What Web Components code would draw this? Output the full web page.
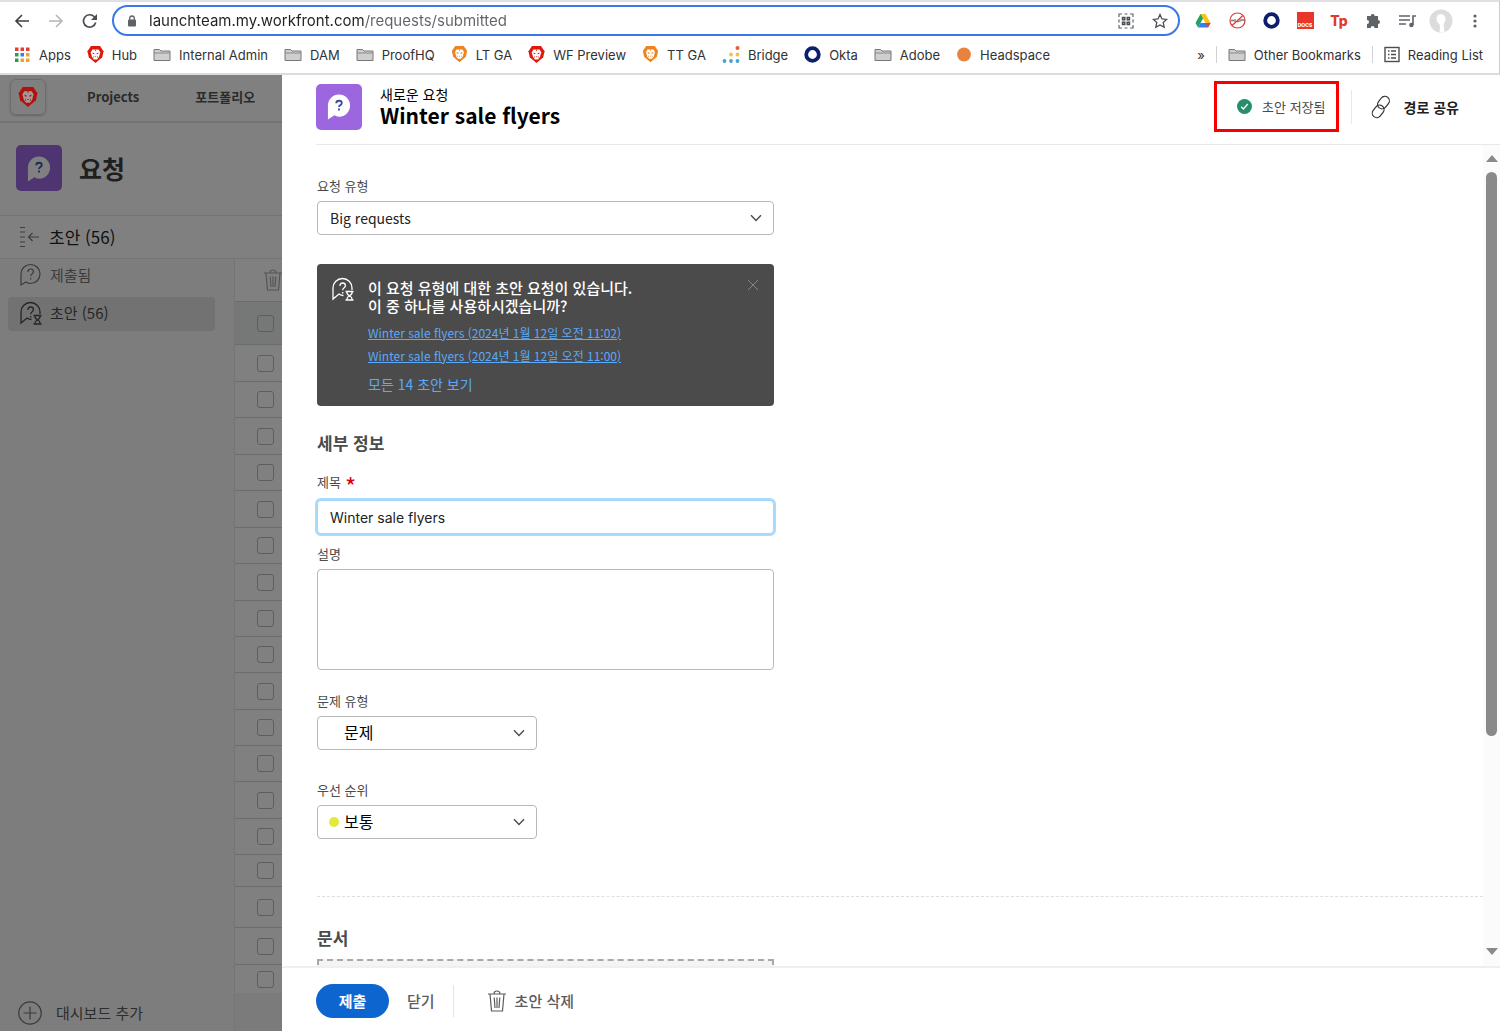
<!DOCTYPE html>
<html lang="ko">
<head>
<meta charset="utf-8">
<title>요청 - Workfront</title>
<style>
  html, body { height: 100%; margin: 0; }
  body { font-family: "Noto Sans CJK KR", sans-serif; color: #222; background: #fff; overflow: hidden; }
</style>
</head>
<body>
<wf-page></wf-page>

<script>
const LION = c => `<path fill="${c}" d="M4 0h10l4 6-1.500 6.500L9 19l-7.500-6.500L0 6z"/><path fill="#fff" d="M5.500 4h7l1.700 3-1.200 5-2.200 3H7.200L5 12 3.800 7z"/><path fill="${c}" d="M5.500 7.200l2.300.8-.2 1.300-1.600-.5zM12.500 7.200l-2.300.8.2 1.300 1.600-.5zM8 11.500h2l-1 1.200zM8.300 4h1.400L9 6.500zM6.300 10.500l1.200 3-1.200-1zM11.700 10.500l-1.200 3 1.200-1z"/>`;
const BUBBLE = '<path d="M2 22V11a9.500 9.500 0 1 1 9.500 9.500q-2 0-4.500-1.500z"/>';
const QMARK = '<path d="M9 9q0-3 2.700-3t2.700 2.600q0 1.600-1.500 2.400-1.200.7-1.200 2.300M11.700 15v1.600"/>';
const DRAFT = '<path d="M12.500 18.500q-2.500 0-4.500-1.500L2 22V11a9.500 9.500 0 1 1 19 0v2M14.500 14.500h8M14.500 23h8M15.800 15q0 2.500 2.700 3.800 2.700-1.300 2.700-3.800M15.800 22.800q0-2.500 2.700-4 2.700 1.500 2.700 4"/>';
const ICONS = {
  back: [16, 16, '<path d="M15 8H2M8 2L2 8l6 6" fill="none" stroke="#3c4043" stroke-width="1.600"/>'],
  forward: [16, 16, '<path d="M1 8h13M8 2l6 6-6 6" fill="none" stroke="#b5b7ba" stroke-width="1.600"/>'],
  reload: [16, 16, '<path d="M13.700 9.500A6.200 6.200 0 1 1 12.300 3.800L14.300 5.800" fill="none" stroke="#4a4d51" stroke-width="1.700"/><path d="M15 1v6H9z" fill="#4a4d51"/>'],
  lock: [10, 12, '<rect x="1" y="4.500" width="8" height="7" rx="1" fill="#5f6368"/><path d="M2.700 5V3.300a2.300 2.300 0 0 1 4.600 0V5" fill="none" stroke="#5f6368" stroke-width="1.300"/>'],
  qr: [16, 16, '<path d="M1 4V1h3M6.500 1h3M12 1h3v3M15 6.500v3M15 12v3h-3M9.500 15h-3M4 15H1v-3M1 9.500v-3" fill="none" stroke="#5f6368" stroke-width="1.200"/><path d="M3.800 3.800h3.700v3.700H3.800zM8.500 3.800h3.700v3.700H8.500zM3.800 8.500h3.700v3.700H3.800zM8.500 8.500h3.700v3.700H8.500z" fill="#4a4d51"/><path d="M5.200 5.200h.9v.9h-.9zM9.900 5.200h.9v.9h-.9zM5.200 9.900h.9v.9h-.9zM9.900 9.900h.9v.9h-.9z" fill="#ccc"/>'],
  star: [16, 16, '<path d="M8 1.500l2 4.400 4.700.5-3.500 3.200 1 4.700L8 11.900l-4.200 2.400 1-4.700L1.300 6.400 6 5.900z" fill="none" stroke="#4a4d51" stroke-width="1.300"/>'],
  drive: [16, 16, '<path d="M5.500 1h5L8 5.500 3 14.500.5 10z" fill="#1da362"/><path d="M5.500 1h5l5 9h-5z" fill="#fbc116"/><path d="M3 14.500L5.500 10H15.500L13 14.500z" fill="#3b7ded"/><path d="M10.800 10h4.700L13 14.500z" fill="#e94235"/>'],
  nosign: [17, 17, '<circle cx="8.500" cy="8.500" r="7.500" fill="#fff" stroke="#dc3b3b" stroke-width="1.200"/><path d="M2 8.500h3M6 7v3M8 9.500h2M11 7v3M12 8h4" stroke="#777" stroke-width="1.300"/><path d="M14 3.500L3 13.500" stroke="#dc3b3b" stroke-width="1.300"/>'],
  ring: [17, 17, '<circle cx="8.500" cy="8.500" r="6.300" fill="none" stroke="#0b1f6e" stroke-width="3.800"/>'],
  puzzle: [17, 17, '<path d="M2 4h3.700a2 2 0 1 1 4 0H13v4a2 2 0 1 1 0 4v4H9.500a1.900 1.900 0 1 0-3.800 0H2v-4a2 2 0 1 0 0-4z" fill="#5f6368"/>'],
  music: [17, 14, '<path d="M0 2h11M0 6h11M0 10h7" stroke="#5f6368" stroke-width="1.600"/><path d="M14 11V2h3" fill="none" stroke="#5f6368" stroke-width="1.600"/><circle cx="12.400" cy="11" r="2.200" fill="#5f6368"/>'],
  avatar: [24, 24, '<circle cx="12" cy="12" r="11.500" fill="#dcdcdc"/><path d="M12 5c3 0 4.500 2.200 4.500 5 0 2-.8 4-2 5l.5 3 .5 5.500h-5L11 18l-.3-2.500Q7.500 13 7.500 10 7.500 5 12 5z" fill="#fff"/>'],
  dots: [4, 16, '<g fill="#5f6368"><circle cx="2" cy="3" r="1.600"/><circle cx="2" cy="8" r="1.600"/><circle cx="2" cy="13" r="1.600"/></g>'],
  apps: [17, 17, '<g><path fill="#e03d33" d="M1 1.500h3.500V5H1zM6.500 1.500H10V5H6.500zM12 1.500h3.500V5H12z"/><path fill="#2e9a50" d="M1 7h3.500v3.500H1zM1 12.500h3.500V16H1z"/><path fill="#3b7ded" d="M6.500 7H10v3.500H6.500z"/><path fill="#f0a32c" d="M12 7h3.500v3.500H12zM6.500 12.500H10V16H6.500zM12 12.500h3.500V16H12z"/></g>'],
  lionRed: [17, 17, LION('#e0170c'), '0 0 18 19'],
  lionOrange: [17, 17, LION('#ee8420'), '-1 0 20 20'],
  folder: [18, 17, '<path d="M1 14.500V3.500h5.500L8 5h9v9.500z" fill="#cfcfcf" stroke="#777"/><path d="M1 7h16" stroke="#888"/>'],
  bridge: [18, 17, '<circle cx="15.500" cy="2" r="2" fill="#ec5a33"/><g fill="#f2c14a"><circle cx="15.500" cy="8.500" r="1.900"/><circle cx="9" cy="8.500" r="1.900"/></g><g fill="#4aa3c7"><circle cx="15.500" cy="15" r="1.900"/><circle cx="9" cy="15" r="1.900"/><circle cx="2.500" cy="15" r="1.900"/></g>'],
  headspace: [16, 17, '<circle cx="8" cy="8.500" r="6.900" fill="#e8833f"/>'],
  list: [16, 17, '<rect x="1" y="1.500" width="14" height="14" fill="none" stroke="#4a4d51" stroke-width="1.400"/><path d="M4 5h1.500M7 5h5M4 8.500h1.500M7 8.500h5M4 12h1.500M7 12h5" stroke="#4a4d51" stroke-width="1.500"/>'],
  lionDim: [20, 20, LION('#b3120b').replace('#fff', '#a39a9a'), '0 0 18 19'],
  collapse: [21, 22, '<path d="M1 1.500h5M1 6h5M1 11h5M1 16h5M1 20.500h5M9 11h11M13.500 7L9.500 11l4 4" fill="none" stroke="#3d3d3d" stroke-width="1.200"/>'],
  request: [24, 24, `<g fill="none" stroke="currentColor" stroke-width="1.200">${BUBBLE}${QMARK}</g>`],
  draft: [24, 24, `<g fill="none" stroke="currentColor" stroke-width="1.300">${DRAFT}${QMARK}</g>`],
  trash: [20, 22, '<g fill="none" stroke="currentColor" stroke-width="1.200"><path d="M1 4h18M3 4l1.500 17h11L17 4M7 4q0-3 3-3t3 3M7.200 7.500L8 18M10 7.500V18M12.800 7.500L12 18"/></g>'],
  plus: [24, 24, '<g fill="none" stroke="#3a3a3a" stroke-width="1.200"><circle cx="12" cy="12" r="11.200"/><path d="M12 5.500v13M5.500 12h13"/></g>'],
  chevron: [12, 8, '<path d="M1 1.200l5 5.200 5-5.200" fill="none" stroke="#4b4b4b" stroke-width="1.400"/>'],
  close: [10, 10, '<path d="M0 0l10 10M10 0L0 10" stroke="#858585"/>'],
  check: [15, 15, '<circle cx="7.500" cy="7.500" r="7.500" fill="#268e6c"/><path d="M4.200 7.800l2.200 2.200L10.800 5" fill="none" stroke="#fff" stroke-width="1.400"/>'],
  link: [20, 24, '<g fill="none" stroke="#333" stroke-width="1.200"><rect x="8" y=".8" width="9" height="13.500" rx="4.500" transform="rotate(38 12.500 7.500)"/><rect x="2.500" y="9.500" width="9" height="13.500" rx="4.500" transform="rotate(38 7 16.500)"/></g>'],
  up: [12, 7, '<path d="M0 7l6-7 6 7z" fill="#8a8a8a"/>'],
  down: [12, 7, '<path d="M0 0l6 7 6-7z" fill="#8a8a8a"/>']
};

class Base extends HTMLElement {
  connectedCallback() {
    if (this.shadowRoot) return;
    this.attachShadow({ mode: 'open' }).innerHTML =
      `<style>*{box-sizing:border-box} button,input,select,textarea{font:inherit;color:inherit;margin:0} button{background:none;border:0;padding:0;display:flex;align-items:center} a{color:inherit;text-decoration:none} ${this.css()}</style>${this.html()}`;
  }
  at(name) { return this.getAttribute(name) || ''; }
}

customElements.define('ui-icon', class extends Base {
  css() { return ':host{display:inline-flex;flex:none} svg{display:block}'; }
  html() {
    const [w, h, body, vb] = ICONS[this.at('name')];
    return `<svg width="${w}" height="${h}" viewBox="${vb || `0 0 ${w} ${h}`}" aria-hidden="true">${body}</svg>`;
  }
});

customElements.define('request-badge', class extends Base {
  css() {
    return `:host{display:flex;flex:none;align-items:center;justify-content:center;width:46px;height:46px;border-radius:5px;background:var(--badge,#9c67de)}`;
  }
  html() {
    return `<svg width="24" height="27" viewBox="0 0 26 28"><path fill="var(--bubble,#fff)" d="M1 28V13A12 12 0 1 1 13 25q-3 0-5-1.500z"/><path d="M10 10.500q0-2.700 3-2.700t3 2.500q0 1.500-1.700 2.300-1.300.7-1.300 2M13 16.300v2" fill="none" stroke="var(--mark,#3b4ba0)" stroke-width="2"/></svg>`;
  }
});

customElements.define('bookmark-link', class extends Base {
  css() { return ':host{display:flex;flex:none} a{display:flex;align-items:center;gap:8px;white-space:nowrap}'; }
  html() { return `<a href="#"><ui-icon name="${this.at('icon')}"></ui-icon><span><slot></slot></span></a>`; }
});

customElements.define('browser-bar', class extends Base {
  css() {
    return `
    :host{display:block;flex:none;height:75px;font-family:Inter,sans-serif;color:#303236;border-top:2px solid #dfe0e4;border-bottom:2px solid #dcdcdc;border-right:1px solid #ccc;background:#fff}
    .tools{display:flex;align-items:center;height:37px;padding:0 7px 0 14px}
    .nav{display:flex;gap:18px;margin-right:14px}
    .omni{flex:1;display:flex;align-items:center;height:31px;border:2px solid #3b78e7;border-radius:16px;padding:0 10px 0 13px}
    .omni input{flex:1;min-width:0;border:0;outline:0;padding:0 0 0 12px;font-size:15px;line-height:20px;color:#202124;-webkit-text-fill-color:transparent;background:linear-gradient(to right,#202124 228px,#5f6368 228px);-webkit-background-clip:text;background-clip:text}
    .omni div{display:flex;gap:18px}
    .ext{display:flex;align-items:center;margin-left:6px}
    .ext button{width:34px;height:26px;justify-content:center}
    .docs{display:flex;align-items:flex-end;justify-content:center;width:17px;height:17px;background:#e8362a;color:#fff;font:800 5px/8px Inter,sans-serif}
    .tp{color:#e0392d;font:800 14px/17px Inter,sans-serif}
    .marks{display:flex;align-items:center;gap:16px;height:31px;padding:0 16px 0 14px;font-size:13px;line-height:18px}
    .right{margin-left:auto;display:flex;align-items:center;gap:11px}
    .sep{width:1px;height:17px;background:#d0d2d5}`;
  }
  html() {
    const marks = [['apps', 'Apps'], ['lionRed', 'Hub'], ['folder', 'Internal Admin'], ['folder', 'DAM'], ['folder', 'ProofHQ'], ['lionOrange', 'LT GA'], ['lionRed', 'WF Preview'], ['lionOrange', 'TT GA'], ['bridge', 'Bridge'], ['ring', 'Okta'], ['folder', 'Adobe'], ['headspace', 'Headspace']];
    const btn = (n, l) => `<button aria-label="${l}"><ui-icon name="${n}"></ui-icon></button>`;
    return `
    <div class="tools">
      <div class="nav">${btn('back', '뒤로')}${btn('forward', '앞으로')}${btn('reload', '새로고침')}</div>
      <div class="omni"><ui-icon name="lock"></ui-icon><input type="text" aria-label="주소" value="launchteam.my.workfront.com/requests/submitted"><div>${btn('qr', 'QR')}${btn('star', '북마크')}</div></div>
      <div class="ext">${btn('drive', 'Drive')}${btn('nosign', '차단')}${btn('ring', 'Okta')}<button><span class="docs">DOCS</span></button><button><span class="tp">Tp</span></button>${btn('puzzle', '확장')}${btn('music', '미디어')}${btn('avatar', '프로필')}${btn('dots', '메뉴')}</div>
    </div>
    <div class="marks">
      ${marks.map(([i, t]) => `<bookmark-link icon="${i}">${t}</bookmark-link>`).join('')}
      <div class="right"><button>»</button><span class="sep"></span><bookmark-link icon="folder">Other Bookmarks</bookmark-link><span class="sep"></span><bookmark-link icon="list">Reading List</bookmark-link></div>
    </div>`;
  }
});

customElements.define('nav-item', class extends Base {
  css() {
    return `:host{display:block;color:#3c3c3c}
    a{display:flex;align-items:center;gap:7px;height:34px;padding:0 11px 2px;border-radius:4px;font-size:15px;line-height:20px}
    :host([active]) a{background:#727272;color:#262626}`;
  }
  html() { return `<a href="#"><ui-icon name="${this.at('icon')}"></ui-icon><slot></slot></a>`; }
});

customElements.define('draft-rows', class extends Base {
  css() {
    return `:host{display:block;border-left:1px solid #757575}
    .bar{display:flex;align-items:center;height:42px;padding-left:28px;color:#555;overflow:hidden}
    .row{display:flex;align-items:center;padding-left:22px;border-top:1px solid #6c6c6c}
    .row.on{background:#767777}
    input{appearance:none;width:17px;height:17px;border:1px solid #5e5e5e;border-radius:3px}
    .rest{height:38px;background:#7b7b7b}`;
  }
  html() {
    const h = [43, 37, 36, 37, 36, 37, 36, 37, 36, 36, 37, 36, 36, 37, 36, 32, 41, 37, 29];
    return `<div class="bar"><ui-icon name="trash"></ui-icon></div>` +
      h.map((v, i) => `<div class="row${i ? '' : ' on'}" style="height:${v}px"><input type="checkbox" aria-label="초안 ${i + 1}"></div>`).join('') + '<div class="rest"></div>';
  }
});

customElements.define('app-backdrop', class extends Base {
  css() {
    return `:host{display:flex;flex-direction:column;width:282px;flex:none;background:#808080;color:#2b2b2b;overflow:hidden}
    header{display:flex;align-items:center;height:48px;padding:0 0 3px 10px;border-bottom:2px solid #737373;font-size:13px;font-weight:700;line-height:20px;flex:none}
    .logo{display:flex;align-items:center;justify-content:center;width:36px;height:36px;border:1px solid #6d6d6d;border-radius:6px;box-shadow:0 1px 2px #666;margin-right:41px}
    .proj{margin-right:56px}
    .title{display:flex;align-items:center;gap:17px;height:93px;padding:0 0 2px 16px;border-bottom:1px solid #747474;--badge:#4f3472;--bubble:#808080;--mark:#1e2a5c;flex:none}
    h1{margin:0;font-size:25px;line-height:32px;font-weight:700;color:#1f1f1f}
    .crumb{display:flex;align-items:center;gap:9px;height:43px;padding-left:19px;border-bottom:1px solid #747474;font-size:17px;line-height:24px;color:#111;flex:none}
    .cols{display:flex;flex:1;min-height:0}
    nav{display:flex;flex-direction:column;width:234px;flex:none;background:#7d7d7d;padding:0 19px 0 8px}
    nav nav-item + nav-item{margin-top:4px}
    .add{margin-top:auto;gap:14px;height:37px;padding-left:10px;font-size:15px;line-height:20px;color:#2d2d2d}
    draft-rows{flex:1}`;
  }
  html() {
    return `
    <header><a class="logo" href="#" aria-label="홈"><ui-icon name="lionDim"></ui-icon></a><a class="proj" href="#">Projects</a><a href="#">포트폴리오</a></header>
    <div class="title"><request-badge></request-badge><h1>요청</h1></div>
    <div class="crumb"><ui-icon name="collapse"></ui-icon>초안 (56)</div>
    <div class="cols">
      <nav><nav-item icon="request">제출됨</nav-item><nav-item icon="draft" active>초안 (56)</nav-item>
        <button class="add"><ui-icon name="plus"></ui-icon>대시보드 추가</button></nav>
      <draft-rows></draft-rows>
    </div>`;
  }
});

customElements.define('panel-header', class extends Base {
  css() {
    return `:host{display:flex;align-items:center;flex:none;height:70px;margin-left:34px;padding:0 41px 6px 0;border-bottom:1px solid #e8e8e8;color:#000}
    .t{margin-left:18px;padding-bottom:4px}
    .t p{margin:0;font-size:14px;line-height:20px}
    h2{margin:0;font-size:21px;line-height:22px;font-weight:700}
    .saved{display:flex;align-items:center;gap:10px;height:51px;margin-left:auto;padding:0 10px 0 20px;border:3px solid #f80000;font-size:13px;line-height:18px;color:#4b4b4b}
    .sep{width:1px;height:34px;background:#e8e8e8;margin:0 19px 0 12px}
    button{gap:13px;font-size:14px;font-weight:700;line-height:20px;color:#222}`;
  }
  html() {
    return `<request-badge></request-badge><div class="t"><p>새로운 요청</p><h2>Winter sale flyers</h2></div>
    <div class="saved" role="status"><ui-icon name="check"></ui-icon>초안 저장됨</div><span class="sep"></span>
    <button><ui-icon name="link"></ui-icon>경로 공유</button>`;
  }
});

customElements.define('form-field', class extends Base {
  css() {
    return `:host{display:block}
    label{display:flex;gap:4px;font-size:13px;line-height:20px;height:20px;margin-bottom:5px;color:#4b4b4b}
    label b{color:#d7000e;font-size:24px;line-height:28px;font-weight:400}
    .box{display:grid;align-items:center}
    .box > *{grid-area:1/1}
    .box ui-icon{justify-self:end;margin-right:12px;pointer-events:none}
    .box .dot{justify-self:start;width:10px;height:10px;border-radius:50%;background:#e2e93a;margin-left:12px}
    select,input,textarea{display:block;width:100%;height:34px;border:1px solid #b8b8b8;border-radius:4px;background:#fff;padding:0 12px;appearance:none;font-size:14px;color:#222;outline:0}
    textarea{height:101px;resize:none}
    :host([kind=short]){width:220px}
    :host([kind=short]) select{padding:0 26px 2px;font-size:16px;color:#000}
    :host([kind=input]) label{margin-bottom:8px}
    input{font-family:Inter,sans-serif;border-color:#a5d8f8;box-shadow:0 0 0 2px #a9dcfb}`;
  }
  html() {
    const k = this.at('kind'), v = this.at('value');
    const c = k === 'input' ? `<input id="f" type="text" value="${v}" required>`
      : k === 'area' ? '<textarea id="f"></textarea>'
      : `<select id="f"><option>${v}</option></select><ui-icon name="chevron"></ui-icon>${this.hasAttribute('dot') ? '<span class="dot"></span>' : ''}`;
    return `<label for="f">${this.at('label')}${k === 'input' ? '<b>*</b>' : ''}</label><div class="box">${c}</div>`;
  }
});

customElements.define('draft-notice', class extends Base {
  css() {
    return `:host{display:flex;align-items:flex-start;height:142px;padding:13px 16px 0 14px;border-radius:4px;background:#4b4b4b;color:#fff}
    .m{flex:1;margin-left:13px;display:flex;flex-direction:column;align-items:flex-start}
    p{margin:2px 0 6px;font-size:15px;line-height:18px;font-weight:500}
    a{font-size:12px;line-height:23px;color:#5aa9fa;text-decoration:underline}
    .all{margin-top:6px;font-size:14px;color:#5aa9fa;line-height:23px}
    .x{padding-top:3px}`;
  }
  html() {
    return `<ui-icon name="draft"></ui-icon><div class="m"><p>이 요청 유형에 대한 초안 요청이 있습니다.<br>이 중 하나를 사용하시겠습니까?</p>
    <a href="#">Winter sale flyers (2024년 1월 12일 오전 11:02)</a><a href="#">Winter sale flyers (2024년 1월 12일 오전 11:00)</a>
    <button class="all">모든 14 초안 보기</button></div><button class="x" aria-label="닫기"><ui-icon name="close"></ui-icon></button>`;
  }
});

customElements.define('scroll-rail', class extends Base {
  css() {
    return `:host{display:flex;flex-direction:column;align-items:center;width:17px;flex:none;background:#fbfbfb;padding:10px 0 11px}
    .track{flex:1;margin:10px 0 4px}
    .thumb{width:11px;height:73%;border-radius:6px;background:#8a8a8a}`;
  }
  html() { return '<ui-icon name="up"></ui-icon><div class="track"><div class="thumb"></div></div><ui-icon name="down"></ui-icon>'; }
});

customElements.define('request-form', class extends Base {
  css() {
    return `:host{display:flex;flex:1;min-height:0;overflow:hidden}
    form{flex:1;min-width:0;padding:31px 0 0 35px}
    .col{width:457px}
    draft-notice{margin-top:29px}
    h3{margin:0;font-size:17px;line-height:24px;font-weight:700;color:#4b4b4b}
    .col h3{margin:25px 0 17px}
    .desc{margin-top:10px}
    .type{margin-top:21px}
    .prio{margin-top:30px}
    hr{height:0;margin:57px 0 29px;border:0;border-top:1px dashed #dedede}
    .drop{width:457px;height:120px;margin-top:9px;border:2px dashed #a8a8a8;background:#f4f4f4}`;
  }
  html() {
    return `<form>
      <div class="col">
        <form-field label="요청 유형" value="Big requests"></form-field>
        <draft-notice></draft-notice>
        <h3>세부 정보</h3>
        <form-field kind="input" label="제목" value="Winter sale flyers"></form-field>
        <form-field class="desc" kind="area" label="설명"></form-field>
        <form-field class="type" kind="short" label="문제 유형" value="문제"></form-field>
        <form-field class="prio" kind="short" label="우선 순위" value="보통" dot></form-field>
      </div>
      <hr><h3>문서</h3><div class="drop"></div>
    </form><scroll-rail></scroll-rail>`;
  }
});

customElements.define('panel-footer', class extends Base {
  css() {
    return `:host{display:flex;align-items:center;flex:none;height:65px;padding:3px 34px 0;border-top:2px solid #efefef;font-size:15px;line-height:20px;font-weight:500;color:#5c5c5c}
    .go{justify-content:center;width:73px;height:34px;border-radius:17px;background:#0d66d0;color:#fff;font-weight:700}
    .no{margin-left:18px}
    .sep{width:1px;height:32px;background:#e4e4e4;margin:0 33px 0 18px}
    .del{gap:8px}`;
  }
  html() {
    return `<button class="go">제출</button><button class="no">닫기</button><span class="sep"></span><button class="del"><ui-icon name="trash"></ui-icon>초안 삭제</button>`;
  }
});

customElements.define('request-panel', class extends Base {
  css() { return ':host{display:flex;flex-direction:column;flex:1;min-width:0;background:#fff}'; }
  html() { return '<panel-header></panel-header><request-form></request-form><panel-footer></panel-footer>'; }
});

customElements.define('wf-page', class extends Base {
  css() { return ':host{display:flex;flex-direction:column;height:100vh} main{display:flex;flex:1;min-height:0}'; }
  html() { return '<browser-bar></browser-bar><main><app-backdrop></app-backdrop><request-panel></request-panel></main>'; }
});
</script>
</body>
</html>
